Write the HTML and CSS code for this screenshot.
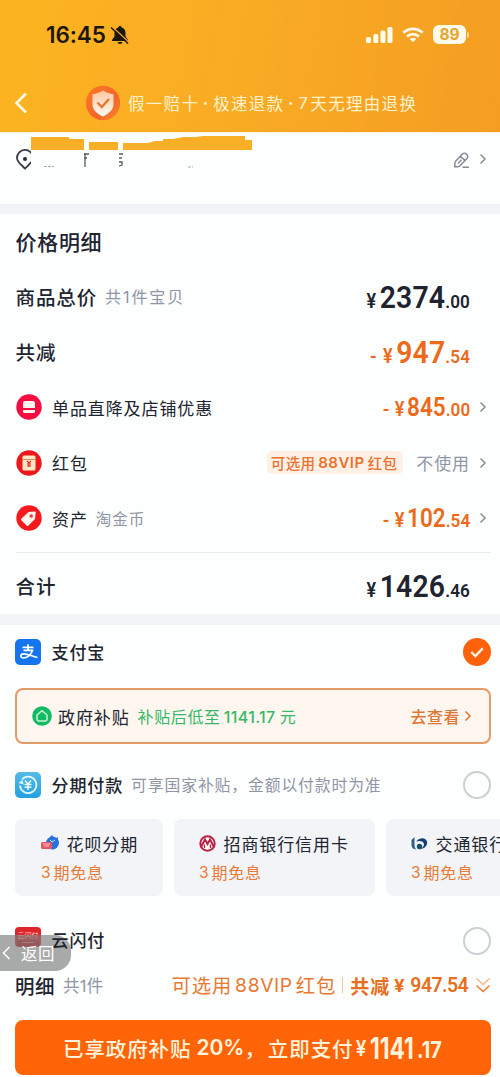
FILE: index.html
```html
<!DOCTYPE html>
<html lang="zh-CN">
<head>
<meta charset="utf-8">
<meta name="viewport" content="width=device-width">
<title>确认订单</title>
<link rel="stylesheet" href="styles.css">
</head>
<body>
<svg class="defs" width="0" height="0"><defs>
  <symbol id="chev" viewBox="0 0 8 12"><path d="M1.500 1.500 6 6 1.500 10.500" fill="none" stroke="currentColor" stroke-width="1.600"/></symbol>
  <linearGradient id="shield" x1="0" y1="0" x2="0" y2="1"><stop offset="0" stop-color="#ffc6a0"/><stop offset="1" stop-color="#fffaf0"/></linearGradient>
  <linearGradient id="disc" x1="0" y1="0" x2="1" y2="1"><stop offset="0" stop-color="#fb7a25"/><stop offset=".6" stop-color="#f4652a"/><stop offset="1" stop-color="#f98b2a"/></linearGradient>
  <linearGradient id="sky" x1="0" y1="0" x2="0" y2="1"><stop offset="0" stop-color="#55bbe8"/><stop offset="1" stop-color="#22a0e2"/></linearGradient>
</defs></svg>
<main class="page">
  <header class="top">
    <div class="status">
      <span class="time">16:45</span>
      <svg class="bell" width="20" height="20" viewBox="0 0 20 20"><path d="M10 1C9 1 8.400 1.600 8.300 2.500 5.800 3.200 4.500 5.300 4.500 8v3.500L2 15v1h16v-1l-2.500-3.500V8c0-2.700-1.300-4.800-3.800-5.500C11.600 1.600 11 1 10 1zM7.500 17c.3 1.300 1.200 2 2.500 2s2.200-.7 2.500-2z" fill="#1d160b"/><path d="M2.500 2 19.200 17.500" stroke="#f9ae23" stroke-width="1.200"/><path d="M1 2.500 18 18.500" stroke="#1d160b" stroke-width="1.500"/></svg>
      <span class="grow"></span>
      <svg width="27" height="18" viewBox="0 0 27 18" fill="#fffbea"><rect x="0" y="11" width="5" height="6" rx="1.500"/><rect x="7.300" y="8" width="5" height="9" rx="1.500"/><rect x="14.500" y="4.500" width="5" height="12.500" rx="1.500"/><rect x="21.500" y="1" width="5" height="16" rx="1.500"/></svg>
      <svg class="wifi" width="22" height="18" viewBox="0 0 24 18" fill="none" stroke="#fffbea" stroke-width="3"><path d="M1.500 6.500C7.500.8 16.500.8 22.500 6.500M5.500 10.600c3.800-3.500 9.200-3.500 13 0"/><path d="M12 17 8.400 13.400c2-1.900 5.200-1.900 7.200 0z" fill="#fffbea" stroke="none"/></svg>
      <span class="battery">89</span><i class="nub"></i>
    </div>
    <div class="promise">
      <svg class="back" width="14" height="22" viewBox="0 0 14 22"><path d="M12 1.500 2.500 11 12 20.500" fill="none" stroke="#fff8e8" stroke-width="2.600"/></svg>
      <svg width="36" height="36" viewBox="0 0 36 36"><circle cx="18" cy="18" r="17.200" fill="url(#disc)"/><path d="M18 5.500c3.500 2.300 7 3.200 10.500 3.800V19c0 6-5 10-10.500 12.500C12 29 7.500 25 7.500 19V9.300c3.500-.6 7-1.500 10.500-3.800z" fill="url(#shield)"/><path d="m12.500 17.500 4.300 4.500 7.200-8" fill="none" stroke="#e7762c" stroke-width="2.300"/></svg>
      <span class="slogan"><span>假一赔十</span><b>·</b><span>极速退款</span><b>·</b><em>7</em><span>天无理由退换</span></span>
    </div>
  </header>

  <section class="address">
    <svg class="scribble" width="260" height="42" viewBox="0 0 260 42">
      <path d="M25 35.500c-4-4-8-6.500-8-10.500a8 8 0 0 1 16-.3c0 4-4 6.800-8 10.800z" fill="none" stroke="#363b47" stroke-width="1.800"/><circle cx="25" cy="26" r="2" fill="#252b38"/>
      <path d="M31 18h54v22H31z" fill="#fdfefe"/>
      <path d="M31 4h38v2h15v11H31zM89 9h29v8H89zM123 10h25l7-2h8v-2h10l10-2h13l7-1h42v4h7v10H123z" fill="#f8ae25"/>
      <path d="M84 21h5M84 25h3M85 20v14M119 21h4M119 25h3M119 29h3v3l-3 1" fill="none" stroke="#555963" stroke-width="1.300"/>
      <path d="M44 33.500h10M188 34h5" stroke="#92959b" stroke-width=".8" stroke-dasharray="3 1"/>
    </svg>
    <svg class="pencil" width="17" height="17" viewBox="0 0 17 17" fill="none" stroke="#858c98" stroke-width="1.500"><path d="M3 8.800 9.200 2.300a3.200 3.200 0 0 1 4.600 4.500L7.200 13.500Q6 14.700 4.500 14.700H1.800V12Q1.800 10 3 8.800zM7.500 4.300l4.500 4.300M5 11.500l3.500-3.700M9.500 15.200H16"/></svg>
    <svg class="chev" width="8" height="12"><use href="#chev"/></svg>
  </section>

  <section class="prices">
    <h2>价格明细</h2>
    <div class="row"><strong>商品总价</strong><small class="count">共1件宝贝</small><span class="amount big">¥<b>2374</b><i>.00</i></span></div>
    <div class="row"><strong>共减</strong><span class="amount big orange"><u>-</u>¥<b>947</b><i>.54</i></span></div>
    <div class="row">
      <svg class="icon" viewBox="0 0 26 26"><circle cx="13" cy="13" r="12.700" fill="#f50d42"/><path d="M9 7h8q2 0 2 2v5H7V9q0-2 2-2zM7 16h12v1.500q0 1.500-1.500 1.500h-9Q7 19 7 17.500z" fill="#fff2ed"/></svg>
      <span class="label">单品直降及店铺优惠</span><span class="amount mid orange"><u>-</u>¥<b>845</b><i>.00</i></span><svg class="chev" width="8" height="12"><use href="#chev"/></svg></div>
    <div class="row">
      <svg class="icon" viewBox="0 0 26 26"><circle cx="13" cy="13" r="12.700" fill="#eb171b"/><rect x="6.500" y="5.500" width="13" height="15" rx="1.500" fill="#ffe7c5"/><path d="M6.500 9.500h13" stroke="#df733b" stroke-width=".8"/><path d="m11 11 2 2 2-2m-2 2v4m-2-3h4m-4 2h4" fill="none" stroke="#e32720" stroke-width="1.100"/></svg>
      <span class="label">红包</span><span class="coupon">可选用<b>88VIP</b>红包</span><span class="unused">不使用</span><svg class="chev" width="8" height="12"><use href="#chev"/></svg></div>
    <div class="row">
      <svg class="icon" viewBox="0 0 26 26"><circle cx="13" cy="13" r="12.700" fill="#f5191e"/><path d="m5.500 13.500 7-6.500 6-.5q1.300 0 1.200 1.300l-.7 6.200-6.500 6.500q-1 1-2 0l-5-5q-1-1 0-2z" fill="#fff5ed"/><circle cx="15.200" cy="11" r="1.800" fill="#ee3940"/></svg>
      <span class="label">资产</span><small class="coin">淘金币</small><span class="amount mid orange"><u>-</u>¥<b>102</b><i>.54</i></span><svg class="chev" width="8" height="12"><use href="#chev"/></svg></div>
    <div class="row total"><strong>合计</strong><span class="amount big">¥<b>1426</b><i>.46</i></span></div>
  </section>

  <section class="payment">
    <div class="pay alipay">
      <svg class="icon" viewBox="0 0 26 26"><rect width="26" height="26" rx="5" fill="#1475ef"/><path d="M7.500 8.300h11M13 5.300v6M8.500 11.300h9c-1 3.500-4.500 7.700-8.700 7.700-3.700 0-4.200-4-.3-4.200 4-.2 8 2.300 14 3.700" fill="none" stroke="#fff" stroke-width="1.700"/></svg>
      <span class="name">支付宝</span>
      <svg class="radio" width="28" height="28" viewBox="0 0 28 28"><circle cx="14" cy="14" r="14" fill="#ff620b"/><path d="m8.300 14 4 4 7.500-7.700" fill="none" stroke="#fff5e9" stroke-width="2.400"/></svg>
    </div>
    <div class="subsidy">
      <svg width="20" height="20" viewBox="0 0 20 20"><circle cx="10" cy="10" r="9.800" fill="#13b963"/><path d="m5 9 5-4.300L15 9v4q0 2-2 2H7q-2 0-2-2z" fill="none" stroke="#c7f3d5" stroke-width="1.500"/></svg>
      <span class="label">政府补贴</span><span class="green">补贴后低至<b>1141.17</b>元</span><span class="look">去查看</span><svg class="go" width="8" height="12"><use href="#chev"/></svg>
    </div>
    <div class="pay">
      <svg class="icon" viewBox="0 0 26 26"><rect width="26" height="26" rx="5" fill="url(#sky)"/><path d="M7 7.500a8.200 8.200 0 1 1-2 6" fill="none" stroke="#e3f8ff" stroke-width="1.700"/><path d="m3.500 11 3.800-3 1.500 4.500z" fill="#e3f8ff"/><path d="m10 8.500 3 3.500 3-3.500M13 12v6M9.500 12.500h7M9.500 15.200h7" fill="none" stroke="#e8fbff" stroke-width="1.500"/></svg>
      <span class="name">分期付款</span><small class="hint">可享国家补贴，金额以付款时为准</small><i class="radio ring"></i>
    </div>
    <div class="plans">
      <div class="plan p1"><p><svg width="18" height="17" viewBox="0 0 18 17"><circle cx="11.500" cy="8" r="6.500" fill="#2872df"/><path d="M9 2 11 0l2 3M14 4l3-2v6" fill="#2872df"/><path d="m9 5 2 2 3-2" fill="none" stroke="#c8e0ff"/><rect x="0" y="7" width="11" height="7" rx="1.500" fill="#e75568"/><path d="M2 9h7M3 11h5" stroke="#ffbec5"/></svg><span>花呗分期</span></p><p class="free"><b>3</b>期免息</p></div>
      <div class="plan p2"><p><svg width="17" height="17" viewBox="0 0 17 17"><circle cx="8.500" cy="8.500" r="7.200" fill="#fff" stroke="#b91f43" stroke-width="2"/><path d="M2 12 6 4.500 8.500 9 11 4.500l4 7.500" fill="none" stroke="#b91f43" stroke-width="2"/><path d="M5.500 13V9.500M11.500 13V9.500" stroke="#b91f43" stroke-width="1.400"/></svg><span>招商银行信用卡</span></p><p class="free"><b>3</b>期免息</p></div>
      <div class="plan p3"><p><svg width="17" height="17" viewBox="0 0 17 17"><path d="M.5 5 3.500 2v8q0 3 2 4.500Q.5 14 .5 10z" fill="#315d91"/><path d="M5 6.500q4-4.500 8-3 4 2 3 5.500-1 4-7 5.500 4-2.500 4-5.500-1-4-8-2.500z" fill="#163e79"/><circle cx="8.500" cy="11.500" r="2.700" fill="#174f6b"/></svg><span>交通银行</span></p><p class="free"><b>3</b>期免息</p></div>
    </div>
    <div class="pay union">
      <svg class="icon" viewBox="0 0 26 26"><rect y="0" width="26" height="20" rx="4" fill="#dd252a"/><path d="M2 14h22v5H2z" fill="#c51720"/><text x="2.500" y="11" class="mini">云闪付</text><path d="M7 15.500h12" stroke="#f6a0a0" stroke-width=".8"/></svg>
      <span class="name">云闪付</span><i class="radio ring"></i>
      <div class="return"><svg width="9" height="14" viewBox="0 0 9 14"><path d="M7.500 1 1.500 7l6 6" fill="none" stroke="#fff" stroke-width="1.500"/></svg><span>返回</span></div>
    </div>
  </section>

  <footer>
    <div class="summary"><strong>明细</strong><small>共1件</small><span class="vip">可选用<b>88VIP</b>红包</span><span class="bar"></span><span class="saved">共减<em>¥</em><b>947.54</b></span>
      <svg class="down" width="16" height="17" viewBox="0 0 16 17" fill="none" stroke="#ed7528" stroke-width="1.300"><path d="m1.500 1.500 6.500 6 6.500-6" opacity=".55"/><path d="m1.500 8.500 6.500 6 6.500-6"/></svg></div>
    <button><span>已享政府补贴</span><b class="pct">20%</b><span>，</span><span class="now">立即支付</span><b class="yen">¥</b><b class="int">1141</b><b class="dec">.17</b></button>
  </footer>
</main>
</body>
</html>
```
FILE: styles.css
```css
* { box-sizing: border-box; }
body { margin: 0; background: #fdfefe; color: #20242f; font-family: Inter, "Noto Sans CJK SC", sans-serif; }
.defs { position: absolute; }
.page { width: 500px; height: 1077px; overflow: hidden; white-space: nowrap; }
b, em, i, u { font-style: normal; text-decoration: none; }
p, h2 { margin: 0; }
svg { flex: none; display: block; }
.grow { flex: 1; }

.top { height: 132px; background: linear-gradient(100deg, #fcb421, #f9ab24 50%, #f49d22); }
.status { height: 69px; padding: 0 31px 0 46px; display: flex; align-items: center; }
.time { font-size: 22.500px; font-weight: 600; width: 64px; color: #1d160b; letter-spacing: -.1px; }
.wifi { margin: 0 9px 0 9px; }
.battery { width: 33px; height: 19px; border-radius: 6px; background: #fffbea; color: #e8a42c; font-size: 15.500px; line-height: 19px; font-weight: 700; text-align: center; }
.nub { width: 2px; height: 6px; margin-left: 1px; border-radius: 0 2px 2px 0; background: #fbd588; }
.promise { height: 67px; padding-left: 14px; display: flex; align-items: center; }
.back { margin-right: 57px; }
.slogan { display: flex; align-items: center; margin-left: 7px; font-size: 16.500px; letter-spacing: 1.300px; color: #fff2cd; }
.slogan b { width: 14px; text-align: center; }
.slogan em { width: 12px; }

.address { height: 72px; display: flex; padding-right: 13px; border-top: 1px solid #fff2d6; }
.scribble { margin-right: 193px; }
.pencil { margin-top: 19px; }
.chev { color: #8d929b; }
.address .chev { margin: 20px 0 0 auto; }

.prices { height: 421px; border: solid #f0f4f6; border-width: 10px 0 11px; padding: 0 13px 0 15.500px; }
h2 { height: 55px; line-height: 57px; font-size: 21px; font-weight: 500; letter-spacing: .7px; }
.row { height: 55.400px; display: flex; align-items: center; }
.row strong { font-size: 19.500px; font-weight: 500; letter-spacing: .9px; margin-bottom: 1px; }
small { color: #8e95a5; }
.count { font-size: 16px; letter-spacing: 1.900px; margin: 0 0 1px 8px; }
.icon { width: 26px; height: 26px; margin-right: 10.500px; }
.label { font-size: 17px; letter-spacing: .9px; }
.coin { font-size: 15.500px; letter-spacing: 1px; margin-left: 8px; }
.amount { margin: 1px 0 0 auto; display: flex; align-items: baseline; transform: scaleX(.9); transform-origin: right; font-family: Roboto, sans-serif; font-weight: 600; font-size: 20px; }
.amount b { margin-left: 4px; font-weight: 600; }
.amount u { margin-right: 7px; }
.amount i { font-size: 19px; letter-spacing: .1px; }
.big { margin-right: 17px; }
.big b { font-size: 31.500px; letter-spacing: .2px; }
.mid { margin-right: 9px; }
.mid b { font-size: 25px; margin-left: 3px; }
.mid u { margin-right: 6px; }
.orange { color: #eb6b1b; }
.coupon { height: 23px; margin-left: auto; padding: 0 6px 0 4px; border-radius: 5px; display: flex; align-items: center; background: #fff0e6; color: #ea722e; font-size: 14.500px; font-weight: 500; letter-spacing: .3px; }
.coupon b { margin: 0 3px; font-size: 15px; font-weight: 600; letter-spacing: .5px; }
.unused { margin: 0 9px 0 13px; color: #8e95a5; font-size: 17px; letter-spacing: .9px; }
.total { border-top: 1px solid #e8eaec; margin: 6px -4px 0 0; height: 66px; padding: 2px 4px 0 0; }

.payment { padding-left: 15px; }
.pay { display: flex; align-items: center; height: 55px; padding-right: 9px; }
.alipay { height: 54px; }
.name { font-size: 17px; letter-spacing: .9px; font-weight: 500; margin-bottom: 1px; }
.radio { margin-left: auto; }
.ring { width: 28px; height: 28px; border: 2px solid #cbd0d5; border-radius: 50%; }
.subsidy { width: 476px; height: 56px; margin: 9px 0 13px; padding: 0 17px 0 15px; display: flex; align-items: center; border: 2px solid #e29a69; border-radius: 8px; background: #fff6f0; }
.subsidy .label { margin-left: 6px; }
.green { margin-left: 8px; font-size: 16px; letter-spacing: .6px; color: #35b967; }
.green b { margin: 0 4px 0 3px; font-size: 16px; font-weight: 500; letter-spacing: .4px; }
.look { margin-left: auto; font-size: 16px; letter-spacing: .5px; color: #de7634; font-weight: 500; }
.go { margin-left: 4px; color: #de7634; }
.hint { margin-left: 8px; font-size: 15.800px; letter-spacing: .9px; }
.plans { display: flex; gap: 11px; margin-top: 7px; overflow: hidden; }
.plan { flex: none; height: 77px; border-radius: 8px; background: #f2f4f7; padding: 10px 0 0 26px; }
.p1 { width: 148px; }
.p2 { width: 201px; padding-left: 25px; }
.p3 { width: 190px; padding-left: 25px; }
.plan p { height: 29px; display: flex; align-items: center; gap: 7.500px; font-size: 17px; letter-spacing: .9px; }
.plan .free { height: 28px; color: #e77b36; font-size: 16px; gap: 2px; letter-spacing: .8px; }
.free b { font-weight: 400; font-size: 15.500px; }
.union { height: 65px; margin-top: 10px; position: relative; align-items: flex-start; padding-top: 21px; }
.union .name { line-height: 28px; position: relative; z-index: 1; }
.mini { fill: #ffd7cf; font-size: 7px; }
.return { position: absolute; left: -15px; top: 29px; width: 71px; height: 36px; border-radius: 0 16px 16px 0; display: flex; align-items: center; background: rgba(125,125,125,.66); color: #fff; font-size: 16.500px; letter-spacing: .6px; gap: 10px; }
.union .return { padding-left: 2px; }

footer { padding: 0 9px 0 15px; }
.summary { height: 49px; display: flex; align-items: center; padding: 0 0 21px; }
.summary strong { font-size: 19.500px; font-weight: 500; letter-spacing: .5px; }
.summary small { font-size: 16.500px; margin-left: 8px; letter-spacing: .3px; }
.vip { display: flex; align-items: center; gap: 3px; margin-left: auto; color: #e97931; font-size: 19.300px; letter-spacing: .9px; }
.vip b { font-weight: 400; letter-spacing: .6px; }
.bar { width: 1px; height: 16px; margin: 0 7px 0 6px; background: #f0c5a8; }
.saved { display: flex; align-items: center; color: #e86e20; font-size: 19px; letter-spacing: 1px; font-weight: 700; }
.saved em { font-family: Roboto, sans-serif; margin: 0 5px 0 4px; }
.saved b { font-family: Roboto, sans-serif; font-size: 19.500px; font-weight: 600; letter-spacing: -.6px; }
.down { margin-left: 7px; }
button { width: 476px; height: 55px; padding: 0 0 0 48px; border: 0; border-radius: 8px; display: flex; align-items: center; background: #ff6408; color: #fff3dc; font: 500 20.500px Inter, "Noto Sans CJK SC", sans-serif; letter-spacing: .9px; white-space: nowrap; }
.pct { font-size: 21px; font-weight: 600; margin-left: 5px; letter-spacing: 0; }
.now { margin-left: 2px; }
.yen { font-size: 22px; font-weight: 600; width: 15px; margin-left: 2px; transform: scaleX(.85); transform-origin: left; }
.int { width: 47px; font-size: 29.500px; font-weight: 700; letter-spacing: 0; transform: scaleX(.77); transform-origin: left; }
.dec { font-size: 23.500px; font-weight: 700; letter-spacing: 0; padding-top: 4px; transform: scaleX(.84); transform-origin: left; }
```
